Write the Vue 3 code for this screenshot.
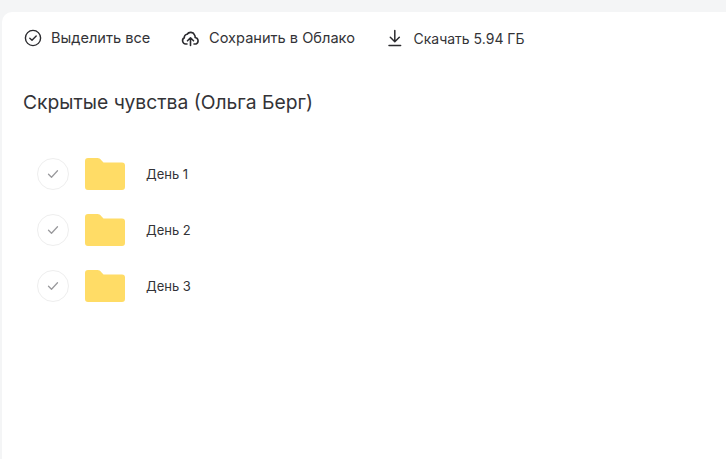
<script setup>
const items = ['День 1', 'День 2', 'День 3']
</script>

<template>
  <div class="page">
    <main class="card">
      <nav class="toolbar">
        <div class="action first">
          <svg class="ico" width="20" height="20" viewBox="0 0 20 20" fill="none" stroke="#2b2b2f" stroke-width="1.4" stroke-linecap="round" stroke-linejoin="round">
            <circle cx="10" cy="10" r="7.6" />
            <path d="M6.8 10.2l2.2 2.1 4.2-4.4" />
          </svg>
          <span>Выделить все</span>
        </div>
        <div class="action second">
          <svg class="ico" width="20" height="20" viewBox="0 0 20 20" fill="none" stroke="#2b2b2f" stroke-width="1.6" stroke-linecap="round" stroke-linejoin="round">
            <path d="M6 16H4.7a3.3 3.3 0 0 1-1.4-6.2A3 3 0 0 1 6.1 6.3 4.2 4.2 0 0 1 13.5 6.9a3 3 0 0 1 .6 2.6A3.4 3.4 0 0 1 15 16h-2" />
            <path d="M9.5 17.5V10M6.5 12.8l3-3 3 3" />
          </svg>
          <span>Сохранить в Облако</span>
        </div>
        <div class="action third">
          <svg class="ico" width="20" height="20" viewBox="0 0 20 20" fill="none" stroke="#2b2b2f" stroke-width="1.5" stroke-linecap="round" stroke-linejoin="round">
            <path d="M8.8 2.5v11M4.3 9.2l4.5 4.5 4.5-4.5" />
            <path d="M3 17.6h11.6" />
          </svg>
          <span>Скачать 5.94 ГБ</span>
        </div>
      </nav>
      <h1 class="title">Скрытые чувства (Ольга Берг)</h1>
      <ul class="list">
        <li v-for="item in items" :key="item" class="row">
          <span class="check">
            <svg width="12" height="10" viewBox="0 0 12 10" fill="none" stroke="#9a9a9d" stroke-width="1.3" stroke-linecap="round" stroke-linejoin="round">
              <path d="M1.5 5.2l3 3 6-6.4" />
            </svg>
          </span>
          <svg class="folder" width="40" height="32" viewBox="0 0 40 32">
            <path fill="#ffdc66" d="M0 3a3 3 0 0 1 3-3h9.5c1.6 0 2.6.7 3.6 1.9L18.5 4.5H37a3 3 0 0 1 3 3V29a3 3 0 0 1-3 3H3a3 3 0 0 1-3-3z" />
          </svg>
          <span class="name">{{ item }}</span>
        </li>
      </ul>
    </main>
  </div>
</template>

<style scoped>
.page {
  width: 726px;
  height: 459px;
  box-sizing: border-box;
  padding: 12px 0 0 2px;
  background: #f4f5f6;
  overflow: hidden;
  font-family: Inter, "Noto Sans", sans-serif;
  color: #333337;
}
.card {
  height: 100%;
  box-sizing: border-box;
  background: #fff;
  border-radius: 10px 0 0 0;
  padding: 14px 0 0 21px;
}
.toolbar {
  display: flex;
  align-items: center;
  height: 24px;
}
.action {
  display: flex;
  align-items: center;
  gap: 8px;
  font-size: 14.6px;
  white-space: nowrap;
}
.first { width: 158px; }
.second { width: 205px; }
.third { gap: 7.5px; font-size: 14px; }
.title {
  margin: 40px 0 0;
  font-size: 19.3px;
  line-height: 24px;
  font-weight: 400;
}
.list {
  list-style: none;
  margin: 32px 0 0;
  padding: 0 0 0 14px;
}
.row {
  display: flex;
  align-items: center;
  height: 56px;
}
.check {
  display: flex;
  align-items: center;
  justify-content: center;
  width: 32px;
  height: 32px;
  box-sizing: border-box;
  border: 1px solid #eeeeee;
  border-radius: 50%;
}
.folder { margin-left: 16px; }
.name {
  margin-left: 21px;
  font-size: 13px;
}
</style>
